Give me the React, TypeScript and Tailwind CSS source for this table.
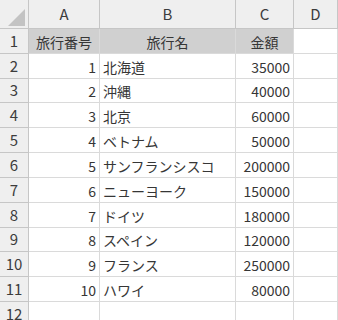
import clsx from "clsx";

type Trip = { no: number; name: string; price: number };

const trips: Trip[] = [
  { no: 1, name: "北海道", price: 35000 },
  { no: 2, name: "沖縄", price: 40000 },
  { no: 3, name: "北京", price: 60000 },
  { no: 4, name: "ベトナム", price: 50000 },
  { no: 5, name: "サンフランシスコ", price: 200000 },
  { no: 6, name: "ニューヨーク", price: 150000 },
  { no: 7, name: "ドイツ", price: 180000 },
  { no: 8, name: "スペイン", price: 120000 },
  { no: 9, name: "フランス", price: 250000 },
  { no: 10, name: "ハワイ", price: 80000 },
];

const font = { fontFamily: '"Noto Sans CJK JP", "Noto Sans", sans-serif' };

function ColHead({ label }: { label: string }) {
  return (
    <div className="flex items-center justify-center border-r border-b border-[#c6c6c6] bg-[#efefef] text-[15px] text-[#3c3c3c]">
      {label}
    </div>
  );
}

function RowHead({ n }: { n: number }) {
  return (
    <div className="flex items-center justify-center border-r border-b border-[#c6c6c6] bg-[#efefef] text-[15px] text-[#3c3c3c]">
      {n}
    </div>
  );
}

function Cell({
  children,
  align = "left",
  title = false,
}: {
  children?: React.ReactNode;
  align?: "left" | "right" | "center";
  title?: boolean;
}) {
  return (
    <div
      className={clsx(
        "flex items-center overflow-visible whitespace-nowrap border-r border-b border-[#dadada] px-[3px] pt-[2px] text-[14px] text-[#363636]",
        align === "right" && "justify-end",
        align === "center" && "justify-center",
        title ? "bg-[#d0d0d0]" : "bg-white"
      )}
    >
      {children}
    </div>
  );
}

export default function App() {
  return (
    <div className="h-[320px] w-[338px] overflow-hidden bg-white" style={font}>
      <div className="grid grid-cols-[29px_71px_136px_58px_44px] grid-rows-[29px_25px_25px_24px_25px_25px_25px_25px_25px_24px_25px_25px_25px]">
        {/* corner with the select-all triangle */}
        <div className="relative border-r border-b border-[#c6c6c6] bg-[#efefef]">
          <svg className="absolute left-[8px] top-[9px]" width="17" height="17" viewBox="0 0 17 17">
            <path d="M17 0 L17 17 L0 17 Z" fill="#c3c3c3" />
          </svg>
        </div>
        <ColHead label="A" />
        <ColHead label="B" />
        <ColHead label="C" />
        <ColHead label="D" />

        <RowHead n={1} />
        <Cell align="center" title>旅行番号</Cell>
        <Cell align="center" title>旅行名</Cell>
        <Cell align="center" title>金額</Cell>
        <Cell />

        {trips.map((t, i) => (
          <div key={t.no} className="contents">
            <RowHead n={i + 2} />
            <Cell align="right">{t.no}</Cell>
            <Cell>{t.name}</Cell>
            <Cell align="right">{t.price}</Cell>
            <Cell />
          </div>
        ))}

        <RowHead n={12} />
        <Cell />
        <Cell />
        <Cell />
        <Cell />
      </div>
    </div>
  );
}
